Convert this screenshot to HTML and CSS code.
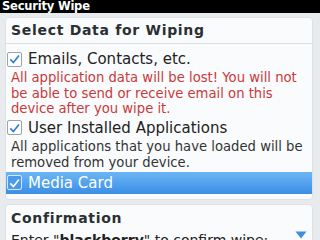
FILE: index.html
```html
<!DOCTYPE html>
<html>
<head>
<meta charset="utf-8">
<link rel="stylesheet" href="styles.css">
</head>
<body>
<div class="titlebar">Security Wipe</div>
<div class="screen">
  <div class="panel">
    <div class="phead">Select Data for Wiping</div>
    <div class="pbody">
      <div class="item"><span class="cb"><svg viewBox="0 0 14 14" width="14" height="14"><path d="M2.5 7.5 L5.8 10.8 L11.8 3.2" fill="none" stroke="#2f7fd8" stroke-width="1.8"/></svg></span><span class="label">Emails, Contacts, etc.</span></div>
      <div class="desc red">All application data will be lost! You will not be able to send or receive email on this device after you wipe it.</div>
      <div class="item"><span class="cb"><svg viewBox="0 0 14 14" width="14" height="14"><path d="M2.5 7.5 L5.8 10.8 L11.8 3.2" fill="none" stroke="#2f7fd8" stroke-width="1.8"/></svg></span><span class="label">User Installed Applications</span></div>
      <div class="desc gray">All applications that you have loaded will be removed from your device.</div>
      <div class="item sel"><span class="cb"><svg viewBox="0 0 14 14" width="14" height="14"><path d="M2.5 7.5 L5.8 10.8 L11.8 3.2" fill="none" stroke="#ffffff" stroke-width="1.8"/></svg></span><span class="label">Media Card</span></div>
    </div>
  </div>
  <div class="panel">
    <div class="phead">Confirmation</div>
    <div class="pbody confirm">
      <div class="enter">Enter "<b>blackberry</b>" to confirm wipe:</div>
    </div>
  </div>
</div>
<svg class="arrow" viewBox="0 0 12 8" width="12" height="8"><path d="M0.5 0.5 H11.5 L6 7.5 Z" fill="#3d8fe0"/></svg>
</body>
</html>
```
FILE: styles.css
```css
html, body { margin: 0; padding: 0; }
body {
  width: 320px; height: 240px; overflow: hidden;
  background: #e8ebee;
  font-family: "DejaVu Sans", sans-serif;
  position: relative;
}
.titlebar {
  background: #000;
  color: #fff;
  font-weight: bold;
  font-size: 11.5px;
  height: 13px;
  line-height: 13px;
  padding-left: 2px;
  letter-spacing: -0.2px;
}
.screen {
  padding: 4px 7px 0 5px;
  display: flex; flex-direction: column; gap: 4px;
}
.panel {
  background: #fafbfc;
  border-radius: 4px;
  border: 1px solid #dfe2e5;
}
.phead {
  font-weight: bold;
  font-size: 14px;
  line-height: 16px;
  color: #2a2f33;
  letter-spacing: 0.7px;
  padding: 4px 0 5px 5px;
  border-bottom: 1px solid #dcdfe2;
}
.panel + .panel .phead { padding-top: 5px; border-bottom-color: transparent; }
.pbody { padding: 4px 0 5px 0; }
.pbody.confirm { padding-top: 0; }
.item {
  display: flex; align-items: center;
  height: 22px;
  font-size: 15px;
  color: #222;
  padding-left: 1px;
}
.cb {
  width: 13px; height: 13px;
  border: 1px solid #9aa3ab;
  border-radius: 2px;
  background: #fff;
  display: flex; align-items: center; justify-content: center;
  margin-right: 6px;
}
.sel { background: linear-gradient(#6cb6f5, #3b8ee6); color: #fff; margin-top: 1px; }
.sel .cb { background: #4a9ae9; border-color: #d6e9fc; }
.desc {
  font-size: 13.2px;
  color: #333;
  padding: 0 2px 0 5px;
}
.red { color: #c9393a; line-height: 15.5px; }
.gray { line-height: 16px; }
.enter { font-size: 14px; color: #222; padding-left: 5px; }
.arrow { position: absolute; left: 295px; top: 231px; }
```
